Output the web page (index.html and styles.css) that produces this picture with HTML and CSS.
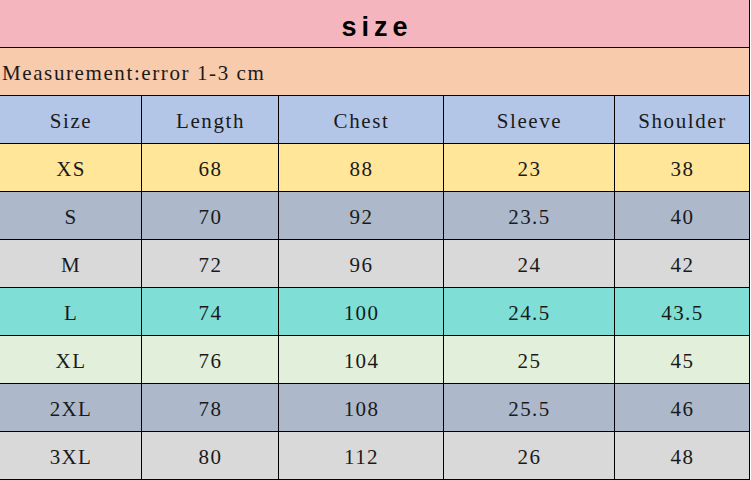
FILE: index.html
```html
<!DOCTYPE html>
<html>
<head>
<meta charset="utf-8">
<link rel="stylesheet" href="styles.css">
</head>
<body>
<div class="chart">
  <div class="title">size</div>
  <div class="note">Measurement:error 1-3 cm</div>

  <div class="cell head">Size</div>
  <div class="cell head">Length</div>
  <div class="cell head">Chest</div>
  <div class="cell head">Sleeve</div>
  <div class="cell head">Shoulder</div>

  <div class="cell xs">XS</div><div class="cell xs">68</div><div class="cell xs">88</div><div class="cell xs">23</div><div class="cell xs">38</div>
  <div class="cell s">S</div><div class="cell s">70</div><div class="cell s">92</div><div class="cell s">23.5</div><div class="cell s">40</div>
  <div class="cell m">M</div><div class="cell m">72</div><div class="cell m">96</div><div class="cell m">24</div><div class="cell m">42</div>
  <div class="cell l">L</div><div class="cell l">74</div><div class="cell l">100</div><div class="cell l">24.5</div><div class="cell l">43.5</div>
  <div class="cell xl">XL</div><div class="cell xl">76</div><div class="cell xl">104</div><div class="cell xl">25</div><div class="cell xl">45</div>
  <div class="cell s">2XL</div><div class="cell s">78</div><div class="cell s">108</div><div class="cell s">25.5</div><div class="cell s">46</div>
  <div class="cell m">3XL</div><div class="cell m">80</div><div class="cell m">112</div><div class="cell m">26</div><div class="cell m">48</div>
</div>
</body>
</html>
```

FILE: styles.css
```css
html, body {
  margin: 0;
  padding: 0;
  background: #ffffff;
}

.chart {
  display: grid;
  grid-template-columns: 142px 137px 165px 171px 135px;
  grid-auto-rows: 48px;
  width: 750px;
  font-family: "Liberation Serif", "Times New Roman", serif;
  font-size: 21px;
  color: #1a1a1a;
}

.chart > div {
  box-sizing: border-box;
  border-right: 1px solid #000000;
  border-bottom: 1px solid #000000;
}

.title {
  grid-column: 1 / -1;
  background: #f4b5bf;
  font-family: "Liberation Sans", Arial, sans-serif;
  font-weight: bold;
  font-size: 27px;
  letter-spacing: 5px;
  text-align: center;
  padding-top: 8px;
  padding-left: 5px;
  line-height: 39px;
  color: #000000;
}

.note {
  grid-column: 1 / -1;
  background: #f8cbad;
  letter-spacing: 1.6px;
  padding-left: 2px;
  padding-top: 3px;
  line-height: 44px;
}

.cell {
  text-align: center;
  letter-spacing: 1.4px;
  padding-top: 3px;
  padding-left: 1px;
  line-height: 44px;
}

.head { background: #b4c6e7; letter-spacing: 1.6px; }
.xs { background: #ffe699; }
.s { background: #adb9ca; }
.m { background: #d9d9d9; }
.l { background: #7fdfd6; }
.xl { background: #e2efda; }
```
